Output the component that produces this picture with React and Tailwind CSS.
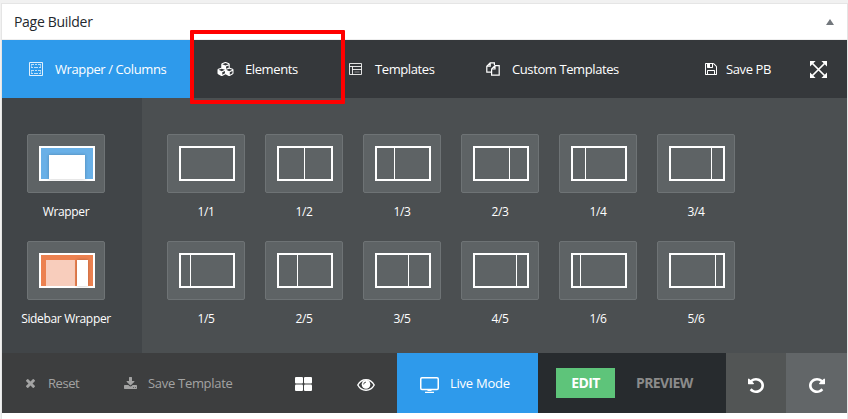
import { FaCubes } from "react-icons/fa";

const PATHS = {
  undo: "M1664 896q0 156-61 298t-164 245-245 164-298 61q-172 0-327-72.5t-264-204.5q-7-10-6.5-22.5t8.5-20.5l137-138q10-9 25-9 16 2 23 12 73 95 179 147t225 52q104 0 198.5-40.5t163.5-109.5 109.5-163.5 40.5-198.5-40.5-198.5-109.5-163.5-163.5-109.5-198.5-40.5q-98 0-188 35.5t-160 101.5l137 138q31 30 14 69-17 40-59 40h-448q-26 0-45-19t-19-45v-448q0-42 40-59 39-17 69 14l130 129q107-101 244.5-156.5t284.5-55.5q156 0 298 61t245 164 164 245 61 298z",
  times: "M1490 1322q0 40-28 68l-136 136q-28 28-68 28t-68-28l-294-294-294 294q-28 28-68 28t-68-28l-136-136q-28-28-28-68t28-68l294-294-294-294q-28-28-28-68t28-68l136-136q28-28 68-28t68 28l294 294 294-294q28-28 68-28t68 28l136 136q28 28 28 68t-28 68l-294 294 294 294q28 28 28 68z",
  download: "M1344 1344q0-26-19-45t-45-19-45 19-19 45 19 45 45 19 45-19 19-45zm256 0q0-26-19-45t-45-19-45 19-19 45 19 45 45 19 45-19 19-45zm128-224v320q0 40-28 68t-68 28h-1472q-40 0-68-28t-28-68v-320q0-40 28-68t68-28h465l135 136q58 56 136 56t136-56l136-136h464q40 0 68 28t28 68zm-325-569q17 41-14 70l-448 448q-18 19-45 19t-45-19l-448-448q-31-29-14-70 17-39 59-39h256v-448q0-26 19-45t45-19h256q26 0 45 19t19 45v448h256q42 0 59 39z",
  save: "M512 1536h768v-384h-768v384zm896 0h128v-896q0-14-10-38.5t-20-34.5l-281-281q-10-10-34-20t-39-10v416q0 40-28 68t-68 28h-576q-40 0-68-28t-28-68v-416h-128v1280h128v-416q0-40 28-68t68-28h832q40 0 68 28t28 68v416zm-384-928v-320q0-13-9.5-22.5t-22.5-9.5h-192q-13 0-22.5 9.5t-9.5 22.5v320q0 13 9.5 22.5t22.5 9.5h192q13 0 22.5-9.5t9.5-22.5zm640 32v928q0 40-28 68t-68 28h-1344q-40 0-68-28t-28-68v-1344q0-40 28-68t68-28h928q40 0 88 20t76 48l280 280q28 28 48 76t20 88z",
};

function Glyph({ d, box, className }) {
  return (
    <svg viewBox={box} preserveAspectRatio="none" fill="currentColor" className={className}>
      <path d={d} />
    </svg>
  );
}

function ColumnsIcon() {
  return (
    <svg viewBox="0 0 14 14" fill="none" stroke="currentColor" className="h-3.5 w-3.5 shrink-0">
      <path d="M.5.5h13v13H.5z" strokeOpacity=".85" />
      <path d="M2 2.5h3M6 2.5h2M9 2.5h3M2 5.5h2M5 5.5h4M10 5.5h2M2 8.5h3M6 8.5h2M9 8.5h3M2 11.5h2M5 11.5h4M10 11.5h2" strokeOpacity=".7" />
      <path d="M2.5 3v2M11.5 3v2M2.5 9v2M11.5 9v2" strokeOpacity=".45" />
    </svg>
  );
}

function TemplatesIcon() {
  return (
    <svg viewBox="0 0 13 12" fill="none" stroke="currentColor" className="h-3 w-[13px] shrink-0">
      <path d="M.5.5h12v11H.5zM.5 3.5h12M3.5 3.5v8M3.5 6.5h9" strokeOpacity=".85" />
      <path d="M5.5 9h5" strokeOpacity=".4" />
    </svg>
  );
}

function CopyIcon() {
  return (
    <svg viewBox="0 0 14 14" fill="none" stroke="currentColor" strokeWidth="1.2" className="h-3.5 w-3.5 shrink-0">
      <path d="M8.4 3V.8H4.2L.8 4.2v6h4.6M4.2.8v3.4H.8" />
      <path d="M9 3.6h4.2v9.6H5.6V7zM9 3.6V7H5.6" />
    </svg>
  );
}

function ExpandIcon() {
  return (
    <svg viewBox="0 0 17 17" fill="currentColor" className="h-[17px] w-[17px] shrink-0">
      <path d="M2.5 2.5l12 12M14.5 2.5l-12 12" stroke="currentColor" strokeWidth="1.7" />
      <path d="M0 0h5.6L0 5.6zM17 0v5.6L11.4 0zM0 17v-5.6L5.6 17zM17 17h-5.6L17 11.4z" />
    </svg>
  );
}

function GridIcon() {
  return (
    <svg viewBox="0 0 17 14" fill="currentColor" className="h-3.5 w-[17px] shrink-0">
      <rect width="8" height="6.6" rx="1" />
      <rect x="9" width="8" height="6.6" rx="1" />
      <rect y="7.6" width="8" height="6.4" rx="1" />
      <rect x="9" y="7.6" width="8" height="6.4" rx="1" />
    </svg>
  );
}

function EyeIcon() {
  return (
    <svg viewBox="0 0 18 12" fill="none" stroke="currentColor" className="h-3 w-[18px] shrink-0">
      <path d="M.8 6C2.6 2.6 5.5.8 9 .8S15.4 2.6 17.2 6C15.4 9.4 12.5 11.2 9 11.2S2.6 9.4.8 6z" strokeWidth="1.4" />
      <circle cx="9" cy="5.4" r="4.3" fill="currentColor" stroke="none" />
      <path d="M6.7 5.4A2.3 2.3 0 0 1 9 3.1" stroke="#3d3e3f" strokeWidth=".9" />
    </svg>
  );
}

function MonitorIcon() {
  return (
    <svg viewBox="0 0 19 16" fill="none" stroke="currentColor" className="h-4 w-[19px] shrink-0">
      <rect x=".75" y=".75" width="17.5" height="11.8" rx="1.2" strokeWidth="1.5" />
      <path d="M7.5 13.5h4M5 15.3h9" strokeWidth="1.2" />
    </svg>
  );
}

const DIVIDERS = [
  ["1/1", ""],
  ["1/2", "ml-[25px]"],
  ["1/3", "ml-[17px]"],
  ["2/3", "ml-[34px]"],
  ["1/4", "ml-[12px]"],
  ["3/4", "ml-[40px]"],
  ["1/5", "ml-[9px]"],
  ["2/5", "ml-[18px]"],
  ["3/5", "ml-[31px]"],
  ["4/5", "ml-[41px]"],
  ["1/6", "ml-[7px]"],
  ["5/6", "ml-[44px]"],
];

function Tile({ label, frame = "", children }) {
  return (
    <div className="flex h-[107px] w-[98px] flex-col items-center">
      <div className="flex h-[59px] w-[78px] shrink-0 items-start rounded-[2px] border border-[#6e7375] bg-[#5e6365] pl-[11px] pt-[11px]">
        <div className={`flex h-[35px] w-14 items-stretch border-2 border-white ${frame}`}>{children}</div>
      </div>
      <span className="mt-[9px] whitespace-nowrap text-[12px] leading-5 tracking-[-0.33px] text-white">{label}</span>
    </div>
  );
}

export default function App() {
  return (
    <div className="h-[419px] w-[848px] overflow-hidden bg-[#f1f1f1] pl-px pt-[3px] font-['Open_Sans',sans-serif]">
      <div className="relative h-[416px] w-[847px] border border-b-0 border-[#e5e5e5] bg-white">
        <header className="flex h-9 items-center justify-between border-b border-[#eee] pl-[12px] pr-[13px]">
          <h2 className="text-[14px] font-medium leading-5 tracking-[-0.3px] text-[#23282d]">Page Builder</h2>
          <span className="h-0 w-0 border-x-4 border-b-[6px] border-x-transparent border-b-[#72777c]" />
        </header>

        <nav className="flex h-[58px] bg-[#35383b] text-[13px] leading-5 tracking-[-0.4px] text-white">
          <div className="flex w-[189px] items-center bg-[#2e9aeb] pl-[27px]">
            <ColumnsIcon />
            <span className="ml-3 whitespace-nowrap">Wrapper / Columns</span>
          </div>
          <div className="flex w-[156px] items-center pl-[26px]">
            <FaCubes className="h-4 w-[17px] shrink-0" />
            <span className="ml-[11px]">Elements</span>
          </div>
          <div className="flex w-[137px] items-center pl-0.5">
            <TemplatesIcon />
            <span className="ml-[13px]">Templates</span>
          </div>
          <div className="flex flex-1 items-center pl-0.5">
            <CopyIcon />
            <span className="ml-3 whitespace-nowrap">Custom Templates</span>
          </div>
          <div className="flex w-[144px] items-center">
            <Glyph d={PATHS.save} box="128 128 1536 1536" className="ml-0.5 h-3 w-3 shrink-0" />
            <span className="ml-[9px] flex-1 whitespace-nowrap">Save PB</span>
            <div className="pr-5">
              <ExpandIcon />
            </div>
          </div>
        </nav>

        <main className="flex h-[255px] bg-[#4b4f51]">
          <aside className="flex w-[140px] flex-col items-start bg-[#414548] pl-[15px] pt-9">
            <Tile label="Wrapper" frame="bg-[#69b0e7]">
              <div className="ml-2 mt-[7px] w-9 bg-white shadow-[0_0_3px_rgba(0,0,0,0.25)]" />
            </Tile>
            <Tile label="Sidebar Wrapper" frame="bg-[#ec8150]">
              <div className="ml-[5px] mt-[5px] w-[29px] bg-[#f8cdbc]" />
              <div className="ml-0.5 mt-[5px] w-[11px] bg-white shadow-[0_0_3px_rgba(0,0,0,0.25)]" />
            </Tile>
          </aside>
          <section className="grid grid-cols-[repeat(6,98px)] content-start pl-[15px] pt-9">
            {DIVIDERS.map(([label, offset]) => (
              <Tile key={label} label={label}>
                {offset && <div className={`w-px bg-white ${offset}`} />}
              </Tile>
            ))}
          </section>
        </main>

        <footer className="flex h-[60px] bg-[#3d3e3f] text-[13px] leading-5 tracking-[-0.3px] text-[#a3a3a3]">
          <div className="flex w-[122px] items-center pl-6">
            <Glyph d={PATHS.times} box="302 366 1188 1188" className="mt-px h-[9px] w-[9px] shrink-0" />
            <span className="ml-[13px] tracking-[-0.45px]">Reset</span>
          </div>
          <div className="flex w-[171px] items-center">
            <Glyph d={PATHS.download} box="64 0 1664 1536" className="h-3 w-[13px] shrink-0" />
            <span className="ml-[11px] whitespace-nowrap">Save Template</span>
          </div>
          <div className="flex w-[62px] items-center pt-0.5 text-white">
            <GridIcon />
          </div>
          <div className="flex w-10 items-center pt-1 text-white">
            <EyeIcon />
          </div>
          <div className="flex w-[141px] items-center bg-[#2e9aeb] pl-[23px] text-white">
            <div className="pt-[3px]">
              <MonitorIcon />
            </div>
            <span className="ml-[11px] whitespace-nowrap tracking-[-0.25px]">Live Mode</span>
          </div>
          <div className="flex w-[188px] items-center bg-[#272b2e] pl-[18px] text-[14px] font-bold tracking-[-0.6px]">
            <span className="flex h-[30px] w-[59px] items-center justify-center bg-[#5ec47a] text-white">EDIT</span>
            <span className="ml-[21px] text-[#8b8b8b]">PREVIEW</span>
          </div>
          <div className="flex w-[60px] items-center justify-center bg-[#525555] pt-1 text-white">
            <Glyph d={PATHS.undo} box="128 128 1536 1536" className="h-[15px] w-4" />
          </div>
          <div className="flex flex-1 items-center justify-center bg-[#626668] pt-1 text-white">
            <Glyph d={PATHS.undo} box="128 128 1536 1536" className="h-[15px] w-4 -scale-x-100" />
          </div>
        </footer>

        <div className="pointer-events-none absolute left-[188px] top-[26px] h-[74px] w-[155px] rounded-[1px] border-4 border-[#ff0000]" />
      </div>
    </div>
  );
}
